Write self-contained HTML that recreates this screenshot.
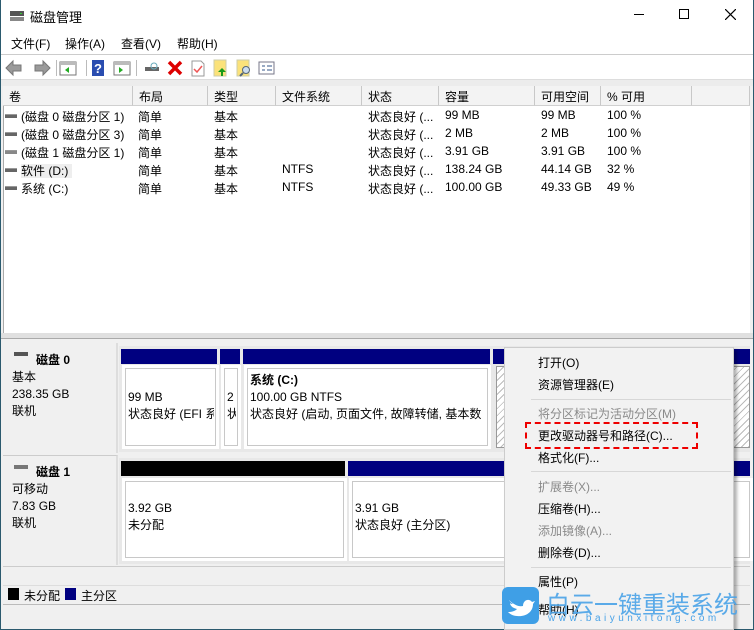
<!DOCTYPE html><html><head><meta charset="utf-8"><style>
*{margin:0;padding:0;box-sizing:border-box}
body{width:754px;height:630px;overflow:hidden;background:#f0f0f0;font:12px "Liberation Sans","Noto Sans CJK SC",sans-serif;color:#000;position:relative}
.a{position:absolute;white-space:nowrap}
.hd{position:absolute;top:86px;height:20px;border-right:1px solid #c8c8c8;border-bottom:1px solid #d0d0d0;background:#f3f3f3;padding:2px 0 0 6px;white-space:nowrap}
.row{position:absolute;left:5px;height:18px;width:740px}
.row span{position:absolute;top:2px;white-space:nowrap}
.drv{display:inline-block;width:12px;height:4px;background:#666;border-top:1px solid #999;margin-right:4px;vertical-align:middle;position:relative;top:-2px}
.nav{background:#000080;position:absolute}
.box{position:absolute;background:#fff;border:1px solid #c8c8c8;outline:3px solid #fff}
.pw{position:absolute;background:#e8e8e8}
.mi{position:absolute;left:538px;white-space:nowrap}
.dis{color:#8a8a8a}
.sep{position:absolute;left:531px;width:200px;height:1px;background:#d7d7d7}
</style></head><body>
<div class="a" style="left:0;top:0;width:754px;height:630px;border:1px solid #2b5a6e;border-top:none"></div>
<div class="a" style="left:1px;top:0;width:752px;height:54px;background:#fff"></div>
<svg class="a" style="left:9px;top:8px" width="16" height="14"><rect x="1" y="3" width="14" height="5" fill="#555"/><rect x="1" y="9" width="14" height="4" fill="#888"/><rect x="11" y="5" width="2" height="1" fill="#3c3"/></svg>
<div class="a" style="left:30px;top:7px;font-size:13px">磁盘管理</div>
<div class="a" style="left:634px;top:14px;width:10px;height:1px;background:#000"></div>
<div class="a" style="left:679px;top:9px;width:10px;height:10px;border:1px solid #000"></div>
<svg class="a" style="left:725px;top:9px" width="11" height="11"><path d="M0 0L11 11M11 0L0 11" stroke="#000" stroke-width="1.2"/></svg>
<div class="a" style="left:11px;top:35px">文件(F)</div>
<div class="a" style="left:65px;top:35px">操作(A)</div>
<div class="a" style="left:121px;top:35px">查看(V)</div>
<div class="a" style="left:177px;top:35px">帮助(H)</div>
<div class="a" style="left:1px;top:54px;width:752px;height:1px;background:#ccc"></div>
<div class="a" style="left:1px;top:55px;width:752px;height:24px;background:#fff"></div>
<svg class="a" style="left:5px;top:59px" width="270" height="18">
<path d="M1 9L8 2V6H16V12H8V16Z" fill="#9a9a9a" stroke="#777"/>
<path d="M45 9L38 2V6H30V12H38V16Z" fill="#9a9a9a" stroke="#777"/>
<rect x="51" y="1" width="1" height="16" fill="#bbb"/>
<rect x="55" y="3" width="16" height="13" fill="#fff" stroke="#777"/><rect x="55" y="3" width="16" height="3" fill="#bbb"/><path d="M64 8L60 11L64 14Z" fill="#2a2"/>
<rect x="81" y="1" width="1" height="16" fill="#bbb"/>
<rect x="87" y="1" width="12" height="16" fill="#2a4db0"/><text x="89" y="14" fill="#fff" font-size="13" font-weight="bold" font-family="Liberation Sans">?</text>
<rect x="109" y="3" width="16" height="13" fill="#fff" stroke="#777"/><rect x="109" y="3" width="16" height="3" fill="#bbb"/><path d="M114 8L118 11L114 14Z" fill="#2a2"/>
<rect x="131" y="1" width="1" height="16" fill="#bbb"/>
<rect x="140" y="8" width="14" height="4" fill="#666"/><circle cx="149" cy="7" r="3" fill="none" stroke="#6ab"/>
<path d="M164 3L176 15M176 3L164 15" stroke="#d00" stroke-width="3.5"/>
<path d="M187 2H196L199 5V17H187Z" fill="#fff" stroke="#999"/><path d="M189 10L192 13L197 7" stroke="#e55" fill="none" stroke-width="1.5"/>
<rect x="209" y="1" width="12" height="16" fill="#fbe27a" stroke="#cca"/><path d="M217 9L213 13H216V17H218V13H221Z" fill="#1a9a1a"/>
<rect x="232" y="1" width="12" height="16" fill="#fbe27a" stroke="#cca"/><circle cx="241" cy="11" r="3.5" fill="#cde" stroke="#567"/><path d="M238 14L235 17" stroke="#567" stroke-width="2"/>
<rect x="254" y="3" width="15" height="12" fill="#fff" stroke="#778"/><path d="M257 7H260M262 7H267M257 11H260M262 11H267" stroke="#358"/>
</svg>
<div class="a" style="left:1px;top:79px;width:752px;height:7px;background:#ececec;border-top:1px solid #ddd"></div>
<div class="a" style="left:3px;top:86px;width:747px;height:247px;background:#fff;border-left:1px solid #aaa"></div>
<div class="hd" style="left:3px;width:130px">卷</div>
<div class="hd" style="left:133px;width:75px">布局</div>
<div class="hd" style="left:208px;width:68px">类型</div>
<div class="hd" style="left:276px;width:86px">文件系统</div>
<div class="hd" style="left:362px;width:77px">状态</div>
<div class="hd" style="left:439px;width:96px">容量</div>
<div class="hd" style="left:535px;width:66px">可用空间</div>
<div class="hd" style="left:601px;width:91px">% 可用</div>
<div class="hd" style="left:692px;width:58px"></div>
<div class="row" style="top:106px"><span style="left:0"><i class="drv"></i>(磁盘 0 磁盘分区 1)</span><span style="left:133px">简单</span><span style="left:209px">基本</span><span style="left:363px">状态良好 (...</span><span style="left:440px">99 MB</span><span style="left:536px">99 MB</span><span style="left:602px">100 %</span></div>
<div class="row" style="top:124px"><span style="left:0"><i class="drv"></i>(磁盘 0 磁盘分区 3)</span><span style="left:133px">简单</span><span style="left:209px">基本</span><span style="left:363px">状态良好 (...</span><span style="left:440px">2 MB</span><span style="left:536px">2 MB</span><span style="left:602px">100 %</span></div>
<div class="row" style="top:142px"><span style="left:0"><i class="drv" style="background:#888"></i>(磁盘 1 磁盘分区 1)</span><span style="left:133px">简单</span><span style="left:209px">基本</span><span style="left:363px">状态良好 (...</span><span style="left:440px">3.91 GB</span><span style="left:536px">3.91 GB</span><span style="left:602px">100 %</span></div>
<div class="row" style="top:160px"><span style="left:0"><i class="drv"></i><b style="font-weight:normal;background:#eee;padding:0 4px 0 0">软件 (D:)</b></span><span style="left:133px">简单</span><span style="left:209px">基本</span><span style="left:277px">NTFS</span><span style="left:363px">状态良好 (...</span><span style="left:440px">138.24 GB</span><span style="left:536px">44.14 GB</span><span style="left:602px">32 %</span></div>
<div class="row" style="top:178px"><span style="left:0"><i class="drv"></i>系统 (C:)</span><span style="left:133px">简单</span><span style="left:209px">基本</span><span style="left:277px">NTFS</span><span style="left:363px">状态良好 (...</span><span style="left:440px">100.00 GB</span><span style="left:536px">49.33 GB</span><span style="left:602px">49 %</span></div>
<div class="a" style="left:1px;top:333px;width:752px;height:6px;background:#e0e0e0;border-bottom:1px solid #aaa"></div>
<div class="a" style="left:3px;top:343px;width:115px;height:110px;background:#f0f0f0;border-right:2px solid #ddd"></div>
<div class="a" style="left:14px;top:352px;width:14px;height:4px;background:#555"></div>
<div class="a" style="left:36px;top:351px;font-weight:bold">磁盘 0</div>
<div class="a" style="left:12px;top:369px;line-height:17px">基本<br>238.35 GB<br>联机</div>
<div class="a" style="left:3px;top:455px;width:115px;height:110px;background:#f0f0f0;border-right:2px solid #ddd;border-top:1px solid #ccc"></div>
<div class="a" style="left:14px;top:465px;width:14px;height:4px;background:#777"></div>
<div class="a" style="left:36px;top:463px;font-weight:bold">磁盘 1</div>
<div class="a" style="left:12px;top:481px;line-height:17px">可移动<br>7.83 GB<br>联机</div>
<div class="pw" style="left:119px;top:346px;width:631px;height:106px"></div>
<div class="nav" style="left:121px;top:349px;width:96px;height:15px"></div>
<div class="nav" style="left:220px;top:349px;width:20px;height:15px"></div>
<div class="nav" style="left:243px;top:349px;width:247px;height:15px"></div>
<div class="nav" style="left:493px;top:349px;width:257px;height:15px"></div>
<div class="box" style="left:125px;top:368px;width:91px;height:78px"></div>
<div class="box" style="left:224px;top:368px;width:14px;height:78px"></div>
<div class="box" style="left:247px;top:368px;width:241px;height:78px"></div>
<div class="a" style="left:496px;top:366px;width:254px;height:82px;background:repeating-linear-gradient(135deg,#fff 0 4px,#bbb 4px 5px);border:1px solid #999"></div>
<div class="a" style="left:128px;top:389px;line-height:17px;width:86px;overflow:hidden">99 MB<br>状态良好 (EFI 系</div>
<div class="a" style="left:227px;top:389px;line-height:17px;width:9px;overflow:hidden">2<br>状</div>
<div class="a" style="left:250px;top:372px;line-height:17px"><b>系统 (C:)</b><br>100.00 GB NTFS<br>状态良好 (启动, 页面文件, 故障转储, 基本数</div>
<div class="pw" style="left:119px;top:458px;width:631px;height:106px"></div>
<div class="a" style="left:121px;top:461px;width:224px;height:15px;background:#000"></div>
<div class="nav" style="left:348px;top:461px;width:402px;height:15px"></div>
<div class="box" style="left:125px;top:481px;width:219px;height:77px"></div>
<div class="box" style="left:352px;top:481px;width:398px;height:77px"></div>
<div class="a" style="left:128px;top:500px;line-height:17px">3.92 GB<br>未分配</div>
<div class="a" style="left:355px;top:500px;line-height:17px">3.91 GB<br>状态良好 (主分区)</div>
<div class="a" style="left:3px;top:566px;width:747px;height:1px;background:#ccc"></div>
<div class="a" style="left:3px;top:585px;width:747px;height:20px;border-top:1px solid #ddd;border-bottom:1px solid #bbb"></div>
<div class="a" style="left:8px;top:588px;width:11px;height:12px;background:#000"></div>
<div class="a" style="left:24px;top:587px">未分配</div>
<div class="a" style="left:65px;top:588px;width:11px;height:12px;background:#000080"></div>
<div class="a" style="left:81px;top:587px">主分区</div>
<div class="a" style="left:504px;top:347px;width:230px;height:283px;background:#f2f2f2;border:1px solid #ccc;box-shadow:3px 3px 3px rgba(0,0,0,.3)"></div>
<div class="mi" style="top:354px">打开(O)</div>
<div class="mi" style="top:376px">资源管理器(E)</div>
<div class="sep" style="top:399px"></div>
<div class="mi dis" style="top:405px">将分区标记为活动分区(M)</div>
<div class="mi" style="top:427px">更改驱动器号和路径(C)...</div>
<div class="mi" style="top:449px">格式化(F)...</div>
<div class="sep" style="top:471px"></div>
<div class="mi dis" style="top:478px">扩展卷(X)...</div>
<div class="mi" style="top:500px">压缩卷(H)...</div>
<div class="mi dis" style="top:522px">添加镜像(A)...</div>
<div class="mi" style="top:544px">删除卷(D)...</div>
<div class="sep" style="top:567px"></div>
<div class="mi" style="top:573px">属性(P)</div>
<div class="mi" style="top:601px">帮助(H)</div>
<div class="a" style="left:525px;top:422px;width:173px;height:27px;border:2px dashed #e00"></div>
<div class="a" style="left:502px;top:587px;width:37px;height:37px;background:#3f9fe6;border-radius:6px"></div>
<svg class="a" style="left:506px;top:594px" width="30" height="24"><path d="M3 6C8 11 13 13 17 12C17 6 23 4 26 8L29 7L27 10C27 18 20 23 11 22C7 22 4 20 2 18C6 18 9 17 11 15C6 14 4 11 4 9C5 10 6 10 7 10C4 8 3 6 3 6Z" fill="#fff"/></svg>
<div class="a" style="left:546px;top:585px;font-size:24px;color:#4aa3e8;opacity:.9">白云一键重装系统</div>
<div class="a" style="left:548px;top:613px;font-size:10px;color:#4aa3e8;letter-spacing:3.5px">www.baiyunxitong.com</div>
</body></html>
